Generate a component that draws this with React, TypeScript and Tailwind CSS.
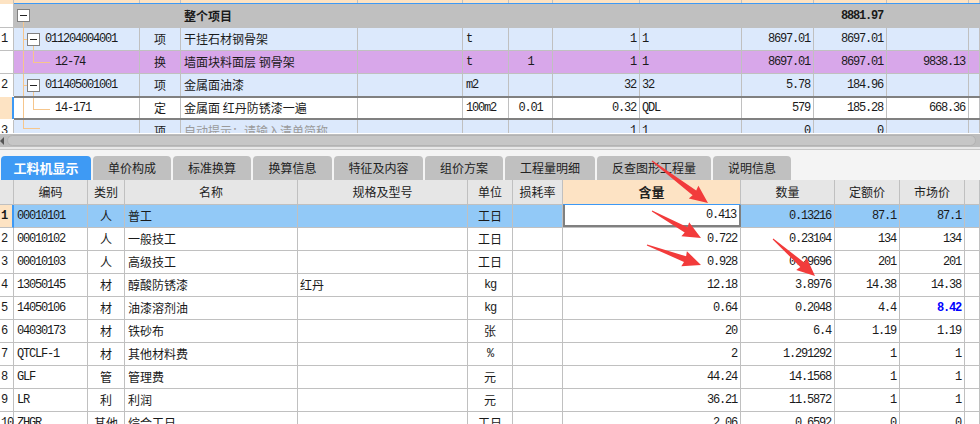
import React from 'react';

const CJK = "font-['Noto_Sans_CJK_SC',sans-serif]";
const MONO = "font-['Liberation_Mono',monospace] tracking-[-1.2px]";
const TOPCOLS = 'grid grid-cols-[126px_41px_177px_105px_46px_44px_87px_102px_72px_73px_82px_11px]';
const BOTCOLS = 'grid grid-cols-[74px_37px_173px_170px_45px_50px_178px_94px_65px_65px_15px]';

type TreeKind = 'root' | 'parent' | 'child' | 'last';

function MinusBox({ left }: { left: number }) {
  return (
    <div
      className="absolute top-[5px] w-[13px] h-[13px] bg-white border border-[#808080] flex items-center justify-center"
      style={{ left }}
    >
      <div className="w-[7px] h-[1px] bg-[#222]" />
    </div>
  );
}

function Tree({ kind }: { kind: TreeKind }) {
  const L = 'absolute bg-[#f6c68c]';
  if (kind === 'root')
    return (
      <>
        <MinusBox left={3} />
        <div className={`${L} left-[9px] top-[18px] bottom-0 w-[1px]`} />
      </>
    );
  if (kind === 'parent')
    return (
      <>
        <div className={`${L} left-[9px] top-0 bottom-0 w-[1px]`} />
        <div className={`${L} left-[9px] top-[11px] w-[4px] h-[1px]`} />
        <MinusBox left={13} />
        <div className={`${L} left-[19px] top-[18px] bottom-0 w-[1px]`} />
      </>
    );
  if (kind === 'child')
    return (
      <>
        <div className={`${L} left-[9px] top-0 bottom-0 w-[1px]`} />
        <div className={`${L} left-[19px] top-0 h-[11px] w-[1px]`} />
        <div className={`${L} left-[19px] top-[11px] w-[17px] h-[1px]`} />
      </>
    );
  return (
    <>
      <div className={`${L} left-[9px] top-0 h-[9px] w-[1px]`} />
      <div className={`${L} left-[9px] top-[8px] w-[17px] h-[1px]`} />
    </>
  );
}

type TopRow = {
  num: string;
  bg: string;
  kind: TreeKind;
  code: string;
  type: string;
  name: string;
  nameCls?: string;
  unit: string;
  coef: string;
  qty: string;
  expr: string;
  price: string;
  total: string;
  c11: string;
};

const topRows: TopRow[] = [
  { num: '', bg: 'bg-[#c0c0c0]', kind: 'root', code: '', type: '', name: '整个项目', nameCls: 'font-bold', unit: '', coef: '', qty: '', expr: '', price: '', total: '8881.97', c11: '' },
  { num: '1', bg: 'bg-[#dce9fc]', kind: 'parent', code: '011204004001', type: '项', name: '干挂石材钢骨架', unit: 't', coef: '', qty: '1', expr: '1', price: '8697.01', total: '8697.01', c11: '' },
  { num: '', bg: 'bg-[#d8a7ea]', kind: 'child', code: '12-74', type: '换', name: '墙面块料面层 钢骨架', unit: 't', coef: '1', qty: '1', expr: '1', price: '8697.01', total: '8697.01', c11: '9838.13' },
  { num: '2', bg: 'bg-[#dce9fc]', kind: 'parent', code: '011405001001', type: '项', name: '金属面油漆', unit: 'm2', coef: '', qty: '32', expr: '32', price: '5.78', total: '184.96', c11: '' },
  { num: '', bg: 'bg-white', kind: 'child', code: '14-171', type: '定', name: '金属面 红丹防锈漆一遍', unit: '100m2', coef: '0.01', qty: '0.32', expr: 'QDL', price: '579', total: '185.28', c11: '668.36' },
  { num: '3', bg: 'bg-[#dce9fc]', kind: 'last', code: '', type: '项', name: '自动提示：请输入清单简称', nameCls: 'text-[#9a9a9a]', unit: '', coef: '', qty: '1', expr: '1', price: '0', total: '0', c11: '' },
];

const V = 'border-r border-[#c0c0c0] flex items-center overflow-hidden whitespace-nowrap';

function TopCells({ r }: { r: TopRow }) {
  const textLeft = r.kind === 'parent' ? 'pl-[31px]' : 'pl-[41px]';
  return (
    <>
      <div className={`${V} relative`}>
        <Tree kind={r.kind} />
        <span className={`${MONO} text-[12px] ${textLeft} relative`}>{r.code}</span>
      </div>
      <div className={`${V} justify-center ${CJK} text-[12px]`}>{r.type}</div>
      <div className={`${V} pl-[3px] ${CJK} text-[12px] ${r.nameCls ?? ''}`}>{r.name}</div>
      <div className={V} />
      <div className={`${V} pl-[3px] ${MONO} text-[12px]`}>{r.unit}</div>
      <div className={`${V} justify-center ${MONO} text-[12px]`}>{r.coef}</div>
      <div className={`${V} justify-end pr-[3px] ${MONO} text-[12px]`}>{r.qty}</div>
      <div className={`${V} pl-[2px] ${MONO} text-[12px]`}>{r.expr}</div>
      <div className={`${V} justify-end pr-[3px] ${MONO} text-[12px]`}>{r.price}</div>
      <div className={`${V} justify-end pr-[3px] ${MONO} text-[12px] ${r.kind === 'root' ? 'font-bold' : ''}`}>{r.total}</div>
      <div className={`${V} justify-end pr-[3px] ${MONO} text-[12px]`}>{r.c11}</div>
      <div className={V} />
    </>
  );
}

function TopTable() {
  const [r0, r1, r2, r3, r4, r5] = topRows;
  const numCell = 'w-[14px] shrink-0 border-r border-b border-[#c0c0c0] flex items-center pl-[1px] text-[12px] bg-white ' + MONO;
  return (
    <div className="flex flex-col">
      <div className="flex h-[4px]">
        <div className="w-[14px] bg-[#fde3c3] border-r border-[#c0c0c0]" />
        <div className={`${TOPCOLS} flex-1 bg-[#fde3c3] border-b border-[#3d99f5]`}>
          {Array.from({ length: 12 }).map((_, i) => (
            <div key={i} className="border-r border-[#c0c0c0]" />
          ))}
        </div>
      </div>
      <div className="flex h-[24px]">
        <div className={numCell}>{r0.num}</div>
        <div className={`${TOPCOLS} flex-1 ${r0.bg} border-b border-[#c0c0c0]`}>
          <TopCells r={r0} />
        </div>
      </div>
      {[r1, r2].map((r, i) => (
        <div key={i} className="flex h-[23px]">
          <div className={numCell}>{r.num}</div>
          <div className={`${TOPCOLS} flex-1 ${r.bg} border-b border-[#c0c0c0]`}>
            <TopCells r={r} />
          </div>
        </div>
      ))}
      <div className="flex h-[22px]">
        <div className={numCell.replace('border-b ', '')}>{r3.num}</div>
        <div className={`${TOPCOLS} flex-1 ${r3.bg}`}>
          <TopCells r={r3} />
        </div>
      </div>
      <div className="flex h-[24px]">
        <div className="w-[14px] shrink-0 bg-[#fde3c3] border-r-2 border-[#3d99f5] my-[1px]" />
        <div className={`${TOPCOLS} flex-1 ${r4.bg} border-y-2 border-[#808080]`}>
          <TopCells r={r4} />
        </div>
      </div>
      <div className="h-[13px] overflow-hidden">
        <div className="flex h-[23px]">
          <div className={numCell}>{r5.num}</div>
          <div className={`${TOPCOLS} flex-1 ${r5.bg} border-b border-[#c0c0c0]`}>
            <TopCells r={r5} />
          </div>
        </div>
      </div>
      <div className="h-[1px] bg-white" />
      <div className="h-[13px] bg-[#bdbdbd] flex items-center">
        <div className="w-0 h-0 border-y-[4px] border-y-transparent border-r-[4px] border-r-[#555]" />
        <div className="ml-[3px] mr-[4px] h-[11px] flex-1 rounded-full bg-[#c6c6c6] border border-[#b3b3b3]" />
      </div>
      <div className="h-[2px] bg-[#e8e8e8]" />
      <div className="h-[1px] bg-[#c6c6c6]" />
    </div>
  );
}

const tabs: { label: string; w: string }[] = [
  { label: '工料机显示', w: 'w-[90px]' },
  { label: '单价构成', w: 'w-[78px]' },
  { label: '标准换算', w: 'w-[78px]' },
  { label: '换算信息', w: 'w-[79px]' },
  { label: '特征及内容', w: 'w-[89px]' },
  { label: '组价方案', w: 'w-[78px]' },
  { label: '工程量明细', w: 'w-[90px]' },
  { label: '反查图形工程量', w: 'w-[114px]' },
  { label: '说明信息', w: 'w-[78px]' },
];

function Tabs() {
  return (
    <div className="h-[30px] bg-[#f4f4f4] flex items-end pl-[1px] gap-[2px]">
      {tabs.map((t, i) => (
        <div
          key={t.label}
          className={`${t.w} h-[24px] rounded-t-[4px] flex items-center justify-center ${CJK} ${
            i === 0 ? 'bg-[#3e9af4] text-white font-bold text-[13px]' : 'bg-[#c0c0c0] text-[#222] text-[12px]'
          }`}
        >
          {t.label}
        </div>
      ))}
    </div>
  );
}

type BotRow = {
  code: string;
  type: string;
  name: string;
  spec: string;
  unit: string;
  unitCjk: boolean;
  amt: string;
  qty: string;
  price: string;
  market: string;
  marketBlue?: boolean;
};

const botRows: BotRow[] = [
  { code: '00010101', type: '人', name: '普工', spec: '', unit: '工日', unitCjk: true, amt: '0.413', qty: '0.13216', price: '87.1', market: '87.1' },
  { code: '00010102', type: '人', name: '一般技工', spec: '', unit: '工日', unitCjk: true, amt: '0.722', qty: '0.23104', price: '134', market: '134' },
  { code: '00010103', type: '人', name: '高级技工', spec: '', unit: '工日', unitCjk: true, amt: '0.928', qty: '0.29696', price: '201', market: '201' },
  { code: '13050145', type: '材', name: '醇酸防锈漆', spec: '红丹', unit: 'kg', unitCjk: false, amt: '12.18', qty: '3.8976', price: '14.38', market: '14.38' },
  { code: '14050106', type: '材', name: '油漆溶剂油', spec: '', unit: 'kg', unitCjk: false, amt: '0.64', qty: '0.2048', price: '4.4', market: '8.42', marketBlue: true },
  { code: '04030173', type: '材', name: '铁砂布', spec: '', unit: '张', unitCjk: true, amt: '20', qty: '6.4', price: '1.19', market: '1.19' },
  { code: 'QTCLF-1', type: '材', name: '其他材料费', spec: '', unit: '%', unitCjk: false, amt: '2', qty: '1.291292', price: '1', market: '1' },
  { code: 'GLF', type: '管', name: '管理费', spec: '', unit: '元', unitCjk: true, amt: '44.24', qty: '14.1568', price: '1', market: '1' },
  { code: 'LR', type: '利', name: '利润', spec: '', unit: '元', unitCjk: true, amt: '36.21', qty: '11.5872', price: '1', market: '1' },
  { code: 'ZHGR', type: '其他', name: '综合工日', spec: '', unit: '工日', unitCjk: true, amt: '2.06', qty: '0.6592', price: '0', market: '0' },
];

function BottomTable() {
  const headers = ['编码', '类别', '名称', '规格及型号', '单位', '损耗率', '含量', '数量', '定额价', '市场价', ''];
  return (
    <div className="flex flex-col">
      <div className="flex h-[25px] bg-[#e6e6e6]">
        <div className="w-[14px] shrink-0 border-r border-b border-[#c0c0c0]" />
        <div className={`${BOTCOLS} flex-1`}>
          {headers.map((h, i) => (
            <div
              key={i}
              className={`border-r flex items-center justify-center ${CJK} text-[12px] text-[#222] ${
                i === 6 ? 'bg-[#fde3c4] font-bold text-[13px] border-b border-b-[#3d99f5] border-r-[#c0c0c0]' : 'border-b border-[#c0c0c0]'
              }`}
            >
              {h}
            </div>
          ))}
        </div>
      </div>
      {botRows.map((r, i) => {
        const sel = i === 0;
        const rowBg = sel ? 'bg-[#92c9f7]' : 'bg-white';
        return (
          <div key={r.code} className="flex h-[23px]">
            <div
              className={`w-[14px] shrink-0 border-b border-[#c0c0c0] flex items-center pl-[1px] text-[12px] ${MONO} ${
                sel ? 'bg-[#fde3c3] font-bold border-r-2 border-r-[#3d99f5]' : 'bg-white border-r'
              }`}
            >
              {i + 1}
            </div>
            <div className={`${BOTCOLS} flex-1 ${rowBg} border-b border-[#c0c0c0]`}>
              <div className={`${V} pl-[3px] ${MONO} text-[12px]`}>{r.code}</div>
              <div className={`${V} justify-center ${CJK} text-[12px]`}>{r.type}</div>
              <div className={`${V} pl-[3px] ${CJK} text-[12px]`}>{r.name}</div>
              <div className={`${V} pl-[2px] ${CJK} text-[12px]`}>{r.spec}</div>
              <div className={`${V} justify-center ${r.unitCjk ? `${CJK} text-[12px]` : `${MONO} text-[12px]`}`}>{r.unit}</div>
              <div className={V} />
              <div
                className={`flex items-center justify-end pr-[3px] overflow-hidden ${MONO} text-[12px] ${
                  sel ? 'bg-white border-l-2 border-r-2 border-b-2 border-[#808080]' : 'border-r border-[#c0c0c0]'
                }`}
              >
                {r.amt}
              </div>
              <div className={`${V} justify-end pr-[3px] ${MONO} text-[12px]`}>{r.qty}</div>
              <div className={`${V} justify-end pr-[3px] ${MONO} text-[12px]`}>{r.price}</div>
              <div
                className={`${V} justify-end pr-[3px] ${MONO} text-[12px] ${
                  r.marketBlue ? 'text-[#0000ff] font-bold' : ''
                }`}
              >
                {r.market}
              </div>
              <div className={V} />
            </div>
          </div>
        );
      })}
    </div>
  );
}

function arrowPoints(x1: number, y1: number, x2: number, y2: number) {
  const dx = x2 - x1;
  const dy = y2 - y1;
  const len = Math.hypot(dx, dy);
  const ux = dx / len;
  const uy = dy / len;
  const nx = -uy;
  const ny = ux;
  const headL = 17;
  const headW = 8;
  const shaftW = 3;
  const tailW = 0.5;
  const bx = x2 - ux * headL;
  const by = y2 - uy * headL;
  const p = (x: number, y: number) => `${x.toFixed(1)},${y.toFixed(1)}`;
  return [
    p(x1 + nx * tailW, y1 + ny * tailW),
    p(bx + nx * shaftW, by + ny * shaftW),
    p(bx + nx * headW - ux * 1, by + ny * headW - uy * 1),
    p(x2, y2),
    p(bx - nx * headW - ux * 1, by - ny * headW - uy * 1),
    p(bx - nx * shaftW, by - ny * shaftW),
    p(x1 - nx * tailW, y1 - ny * tailW),
  ].join(' ');
}

const arrows = [
  [652, 161, 708, 203],
  [652, 211, 701, 238],
  [647, 245, 701, 265],
  [773, 239, 815, 276],
];

export default function App() {
  return (
    <div className="relative w-[980px] h-[424px] overflow-hidden bg-white text-[#1a1a1a]">
      <TopTable />
      <Tabs />
      <BottomTable />
      <svg className="absolute inset-0 pointer-events-none" width={980} height={424}>
        {arrows.map(([a, b, c, d], i) => (
          <polygon key={i} points={arrowPoints(a, b, c, d)} fill="#f23b3b" />
        ))}
      </svg>
    </div>
  );
}
